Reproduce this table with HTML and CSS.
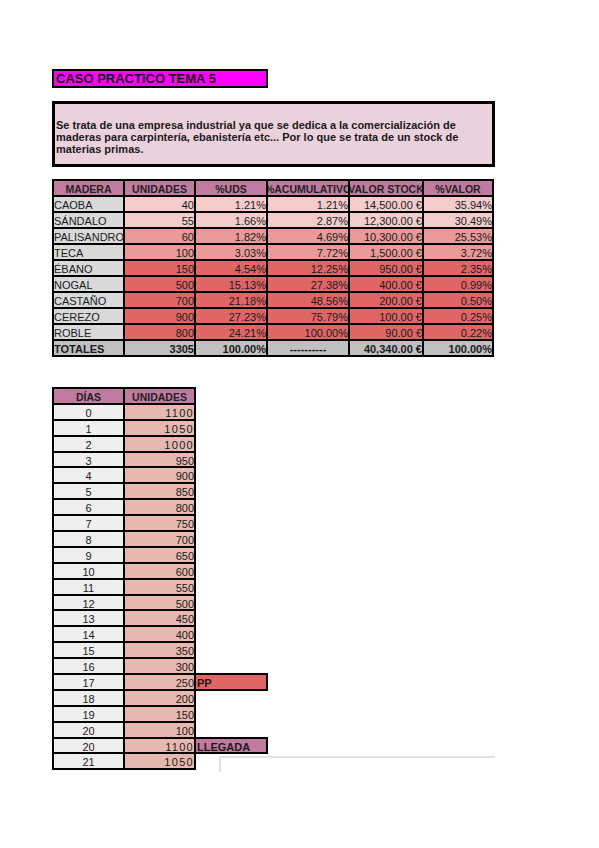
FILE: index.html
```html
<!DOCTYPE html>
<html lang="es">
<head>
<meta charset="utf-8">
<title>Caso práctico tema 5</title>
<link rel="stylesheet" href="styles.css">
</head>
<body>
<div class="page">
  <div class="title">CASO PRACTICO TEMA 5</div>
  <div class="desc">Se trata de una empresa industrial ya que se dedica a la comercialización de maderas para carpintería, ebanistería etc... Por lo que se trata de un stock de materias primas.</div>

  <div class="grid t1">
    <div class="c hd">MADERA</div><div class="c hd">UNIDADES</div><div class="c hd">%UDS</div><div class="c hd">%ACUMULATIVO</div><div class="c hd">VALOR STOCK</div><div class="c hd">%VALOR</div>

    <div class="c name">CAOBA</div><div class="c num l1">40</div><div class="c num l1">1.21%</div><div class="c num l1">1.21%</div><div class="c num l1">14,500.00 €</div><div class="c num l1">35.94%</div>
    <div class="c name">SÁNDALO</div><div class="c num l1">55</div><div class="c num l1">1.66%</div><div class="c num l1">2.87%</div><div class="c num l1">12,300.00 €</div><div class="c num l1">30.49%</div>
    <div class="c name">PALISANDRO</div><div class="c num l2">60</div><div class="c num l2">1.82%</div><div class="c num l2">4.69%</div><div class="c num l2">10,300.00 €</div><div class="c num l2">25.53%</div>
    <div class="c name">TECA</div><div class="c num l2">100</div><div class="c num l2">3.03%</div><div class="c num l2">7.72%</div><div class="c num l2">1,500.00 €</div><div class="c num l2">3.72%</div>
    <div class="c name">ÉBANO</div><div class="c num l3">150</div><div class="c num l3">4.54%</div><div class="c num l3">12.25%</div><div class="c num l3">950.00 €</div><div class="c num l3">2.35%</div>
    <div class="c name">NOGAL</div><div class="c num l3">500</div><div class="c num l3">15.13%</div><div class="c num l3">27.38%</div><div class="c num l3">400.00 €</div><div class="c num l3">0.99%</div>
    <div class="c name">CASTAÑO</div><div class="c num l3">700</div><div class="c num l3">21.18%</div><div class="c num l3">48.56%</div><div class="c num l3">200.00 €</div><div class="c num l3">0.50%</div>
    <div class="c name">CEREZO</div><div class="c num l3">900</div><div class="c num l3">27.23%</div><div class="c num l3">75.79%</div><div class="c num l3">100.00 €</div><div class="c num l3">0.25%</div>
    <div class="c name">ROBLE</div><div class="c num l3">800</div><div class="c num l3">24.21%</div><div class="c num l3">100.00%</div><div class="c num l3">90.00 €</div><div class="c num l3">0.22%</div>

    <div class="c tot name">TOTALES</div><div class="c tot num">3305</div><div class="c tot num">100.00%</div><div class="c tot ctr">----------</div><div class="c tot num">40,340.00 €</div><div class="c tot num">100.00%</div>
  </div>

  <div class="lower">
    <div class="grid t2">
      <div class="c hd">DÍAS</div><div class="c hd">UNIDADES</div><div></div>
      <div class="c day">0</div><div class="c units w">1100</div><div></div>
      <div class="c day">1</div><div class="c units w">1050</div><div></div>
      <div class="c day">2</div><div class="c units w">1000</div><div></div>
      <div class="c day">3</div><div class="c units">950</div><div></div>
      <div class="c day">4</div><div class="c units">900</div><div></div>
      <div class="c day">5</div><div class="c units">850</div><div></div>
      <div class="c day">6</div><div class="c units">800</div><div></div>
      <div class="c day">7</div><div class="c units">750</div><div></div>
      <div class="c day">8</div><div class="c units">700</div><div></div>
      <div class="c day">9</div><div class="c units">650</div><div></div>
      <div class="c day">10</div><div class="c units">600</div><div></div>
      <div class="c day">11</div><div class="c units">550</div><div></div>
      <div class="c day">12</div><div class="c units">500</div><div></div>
      <div class="c day">13</div><div class="c units">450</div><div></div>
      <div class="c day">14</div><div class="c units">400</div><div></div>
      <div class="c day">15</div><div class="c units">350</div><div></div>
      <div class="c day">16</div><div class="c units">300</div><div></div>
      <div class="c day">17</div><div class="c units">250</div><div class="c note pp">PP</div>
      <div class="c day">18</div><div class="c units">200</div><div></div>
      <div class="c day">19</div><div class="c units">150</div><div></div>
      <div class="c day">20</div><div class="c units">100</div><div></div>
      <div class="c day">20</div><div class="c units w">1100</div><div class="c note arr">LLEGADA</div>
      <div class="c day">21</div><div class="c units w">1050</div><div></div>
    </div>
    <div class="frame"></div>
  </div>
</div>
</body>
</html>
```

FILE: styles.css
```css
html, body {
  margin: 0;
  padding: 0;
  background: #ffffff;
}

body {
  font-family: "Liberation Sans", Arial, sans-serif;
  color: #111111;
}

.page {
  padding: 69px 0 40px 52px;
}

.title {
  box-sizing: border-box;
  width: 216px;
  height: 19px;
  border: 2px solid #000;
  background: #ff00ff;
  padding-left: 2px;
  font-size: 13px;
  font-weight: bold;
  line-height: 15px;
  color: #111;
  white-space: nowrap;
  overflow: hidden;
}

.desc {
  box-sizing: border-box;
  width: 443px;
  height: 66px;
  margin-top: 13px;
  border: 3px solid #000;
  background: #ead1dc;
  padding: 15px 30px 0 1px;
  font-size: 11px;
  font-weight: bold;
  line-height: 12px;
  color: #1a1a1a;
}

.grid {
  display: grid;
  grid-auto-rows: 16px;
  margin-left: 1px;
}

.t1 {
  margin-top: 13px;
  grid-template-columns: 71px 71px 72px 82px 74px 70px;
  width: 440px;
}

.lower {
  position: relative;
  margin-top: 32px;
}

.t2 {
  grid-template-columns: 71px 71px 72px;
  grid-auto-rows: 15.9px;
  width: 214px;
}

.c {
  box-sizing: border-box;
  border: 1px solid #000;
  box-shadow: 0 0 0 1px #000;
  overflow-x: clip;
  overflow-y: visible;
  white-space: nowrap;
  padding-top: 1px;
  font-size: 11px;
  line-height: 14px;
  color: #1a1a1a;
}

.hd {
  display: flex;
  justify-content: center;
  align-items: flex-start;
  background: #c27ba0;
  font-size: 10.5px;
  font-weight: bold;
  color: #222;
}

.name {
  background: #d9d9d9;
  text-align: left;
}

.num {
  text-align: right;
}

.l1 { background: #f4cccc; }
.l2 { background: #ea9999; }
.l3 { background: #e06666; }

.tot {
  background: #c0c0c0;
  font-weight: bold;
}

.ctr {
  display: flex;
  justify-content: center;
}

.day {
  background: #efefef;
  text-align: center;
}

.units {
  background: #e6b8af;
  text-align: right;
}

.units.w {
  letter-spacing: 1.3px;
}

.note {
  font-weight: bold;
  text-align: left;
  padding-left: 1px;
}

.pp { background: #e06666; }
.arr { background: #c27ba0; }

.frame {
  position: absolute;
  left: 167px;
  top: 368px;
  width: 274px;
  height: 14px;
  border-top: 2px solid #e2e2e2;
  border-left: 2px solid #e2e2e2;
}
```
